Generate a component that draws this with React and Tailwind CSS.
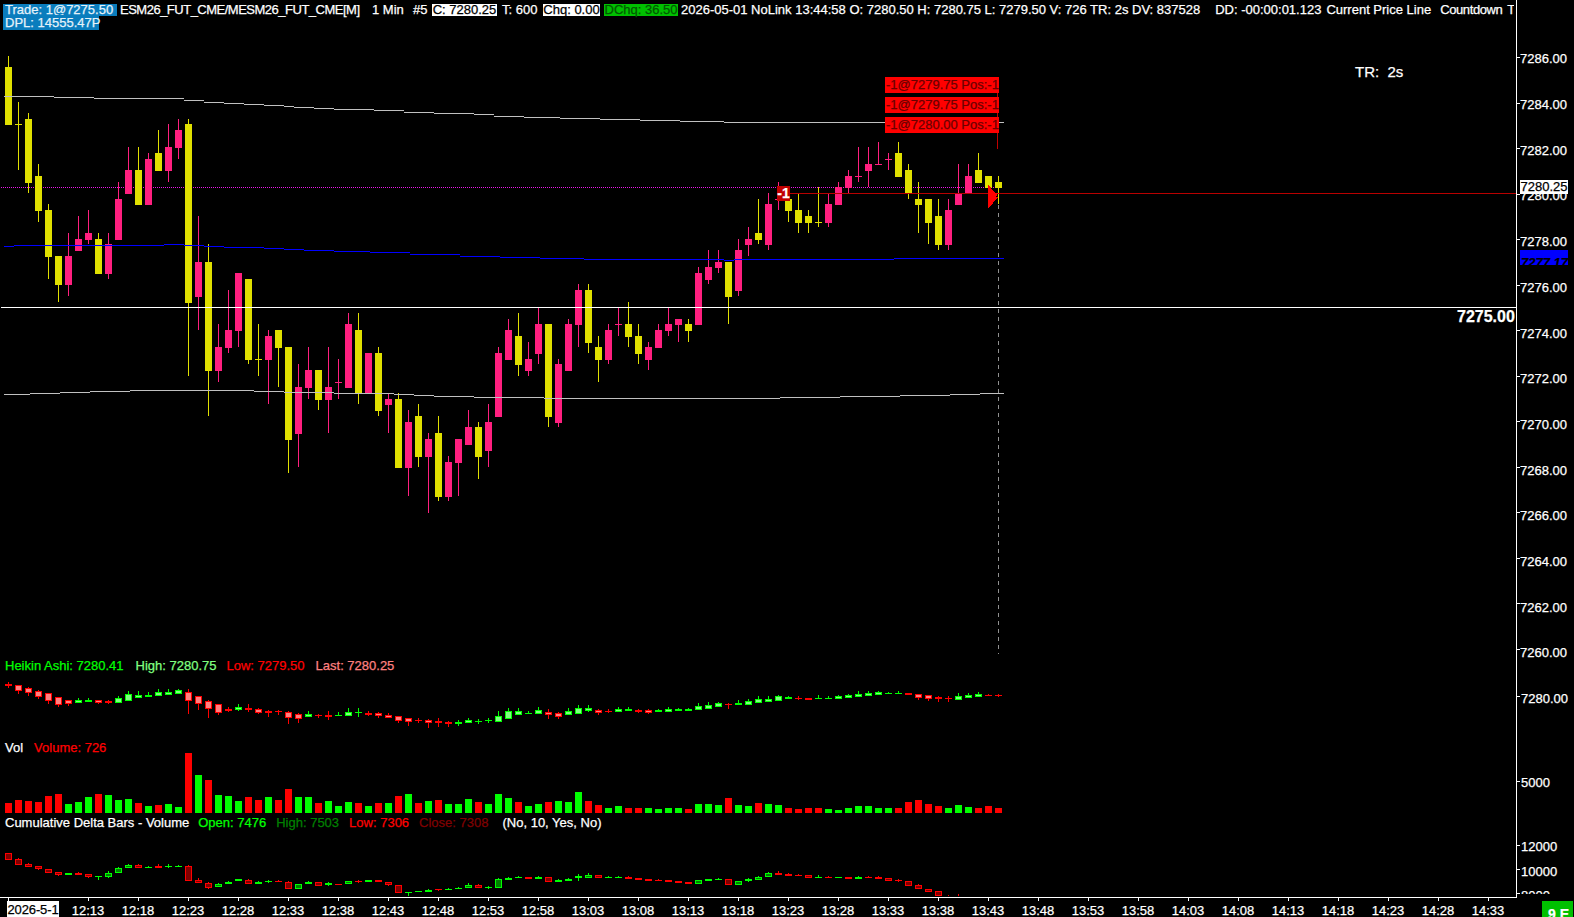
const PINK = "#ff1f7f";
const YELLOW = "#e0e000";

// y, wick top, body top, body bottom, wick bottom (screen pixels)
const PRICE = [
  ["y",56,67,125,125],["y",102,124,125,170],["y",113,119,183,193],["y",164,176,211,222],["y",204,210,257,279],
  ["y",256,256,285,302],["p",233,256,285,296],["p",216,239,251,251],["p",210,233,240,244],["y",233,239,274,274],
  ["p",233,244,274,279],["p",182,199,240,240],["p",147,170,194,194],["y",147,170,205,205],["p",153,159,205,205],
  ["y",130,153,171,171],["p",124,147,171,182],["p",119,130,148,159],["y",119,124,303,376],["p",216,262,297,330],
  ["y",244,262,371,416],["p",324,347,371,382],["p",290,330,348,353],["p",273,273,331,347],["y",279,279,360,364],
  ["y",324,359,360,376],["p",330,336,360,404],["y",330,330,348,387],["y",347,347,440,473],["p",364,387,434,467],
  ["p",347,370,388,399],["y",370,370,400,410],["p",347,387,400,433],["p",359,382,383,399],["p",313,324,388,388],
  ["y",313,330,393,404],["p",353,353,393,393],["y",347,353,411,416],["p",394,399,405,433],["y",393,399,468,468],
  ["p",410,422,468,496],["y",404,416,457,467],["p",433,439,457,513],["y",416,433,497,501],["p",456,462,497,501],
  ["p",439,439,463,496],["p",410,427,445,445],["y",422,427,457,479],["p",404,422,451,467],["p",347,353,417,417],
  ["p",319,330,360,360],["y",313,336,365,376],["p",342,359,371,376],["p",308,324,354,364],["y",324,324,417,427],
  ["p",359,364,423,427],["p",319,324,371,371],["p",284,290,325,347],["y",284,290,343,353],["y",336,347,360,382],
  ["p",324,330,360,364],["p",308,324,325,336],["y",302,324,337,347],["y",324,336,354,364],["p",342,347,360,370],
  ["p",324,330,348,348],["p",308,324,331,336],["p",319,319,325,342],["y",319,324,331,342],["p",267,273,325,325],
  ["p",250,267,280,284],["p",250,262,268,273],["y",262,262,297,324],["p",239,250,291,296],["p",227,239,245,256],
  ["y",199,233,240,244],["p",193,204,245,250],["p",182,199,200,210],["y",199,199,211,222],["y",194,210,223,233],
  ["y",210,216,223,233],["y",187,222,223,227],["p",194,204,223,227],["p",182,187,205,205],["p",170,176,188,194],
  ["p",147,176,177,182],["p",147,164,171,187],["p",142,164,165,165],["p",153,159,160,170],["y",142,153,177,177],
  ["y",164,170,193,199],["y",182,199,205,233],["y",199,199,223,244],["y",199,216,245,250],["p",199,210,245,250],
  ["p",164,193,205,205],["p",164,176,193,193],["y",153,170,183,183],["y",176,176,188,188],["y",176,182,188,204],
];

// Heikin Ashi values are in crop units: y = 650 + v / 3
const HA = [
  ["r",97,102,109,115],["r",105,106,122,131],["r",110,113,128,137],["r",120,122,140,147],["r",128,130,152,161],
  ["r",142,142,164,171],["r",150,151,161,167],["g",145,150,158,158],["g",145,149,155,155],["r",150,151,158,161],
  ["r",150,153,159,161],["g",137,145,158,158],["g",124,132,152,152],["g",124,136,143,143],["g",125,134,140,140],
  ["g",118,126,137,137],["g",116,126,134,134],["g",117,121,131,131],["r",117,127,152,191],["r",138,139,163,179],
  ["r",151,152,178,204],["r",163,163,188,195],["r",170,176,183,185],["g",162,172,180,182],["r",162,174,179,187],
  ["r",174,176,188,191],["r",180,182,188,201],["r",180,183,186,195],["r",184,185,204,222],["r",190,193,206,220],
  ["g",183,192,200,202],["r",192,195,198,204],["r",183,194,200,209],["g",186,194,197,197],["g",174,187,197,197],
  ["g",174,186,189,202],["r",184,188,194,197],["r",185,190,197,203],["r",190,194,203,203],["r",197,199,212,219],
  ["r",203,205,215,228],["r",203,209,213,218],["r",208,211,220,234],["r",205,214,220,232],["r",213,217,223,232],
  ["g",210,215,222,228],["g",205,210,220,220],["g",208,213,215,222],["g",203,211,214,219],["g",183,197,215,215],
  ["g",175,184,206,206],["g",175,184,194,194],["g",184,189,191,191],["g",172,181,191,191],["r",178,186,194,207],
  ["r",186,190,200,207],["g",175,184,194,194],["g",166,175,191,191],["g",166,174,182,186],["r",177,179,188,195],
  ["r",178,182,184,189],["g",172,177,185,185],["g",172,177,182,182],["r",176,180,185,189],["r",178,181,188,192],
  ["g",177,180,185,185],["g",172,178,185,185],["g",174,177,182,182],["g",174,177,182,182],["g",160,169,179,179],
  ["g",157,164,176,176],["g",156,160,170,170],["r",158,162,166,177],["g",151,159,166,166],["g",148,153,164,164],
  ["g",139,148,158,158],["g",138,148,155,155],["g",136,139,152,152],["g",139,141,146,146],["r",138,143,145,150],
  ["r",144,144,149,149],["g",136,145,146,146],["g",138,145,146,146],["g",135,139,146,146],["g",132,136,143,143],
  ["g",124,132,140,140],["g",124,130,137,137],["g",124,127,134,134],["g",127,128,131,131],["g",124,129,131,131],
  ["r",130,130,136,136],["r",132,133,143,149],["r",136,136,146,152],["r",139,142,148,156],["r",139,145,148,155],
  ["g",130,138,149,149],["g",129,135,143,143],["g",126,132,140,140],["r",132,135,136,138],["r",131,134,136,141],
];

const VOL_COLORS =
  "rrrrrr" + "gggrgggrgrgg" + "rgrgggrrgrrg" + "grgggrgrgr" + "grgrgggrgg" +
  "grggrgggrr" + "ggrrggggrg" + "ggrggrggrr" + "rrgggggggr" + "rrrrgggrrr";
const VOL_TOPS = [
  459,450,453,456,438,432,462,456,441,432,435,450,447,459,468,465,462,471,309,375,
  390,435,438,453,441,450,441,450,417,441,441,459,453,468,456,459,468,459,459,438,
  432,459,453,450,462,462,447,456,462,432,
  444,456,468,462,456,453,456,426,453,465,474,468,474,474,474,477,474,474,477,462,
  462,465,444,465,468,459,462,465,474,477,474,474,477,480,474,468,468,474,474,474,
  456,450,462,468,474,465,471,474,468,474,
];

const DELTA = [
  ["r",610,610,629,629],["r",624,628,644,644],["r",639,642,650,650],["r",649,649,658,660],["r",658,658,668,668],
  ["r",666,667,674,677],["g",670,670,674,674],["r",665,670,674,674],["r",672,673,682,684],["g",677,679,682,689],
  ["g",664,670,680,684],["g",651,655,670,670],["g",643,646,655,655],["r",643,646,655,655],["g",648,650,655,655],
  ["r",643,649,653,653],["g",643,649,652,653],["g",645,648,650,650],["r",646,649,692,692],["r",685,691,698,698],
  ["r",697,698,713,716],["g",700,703,712,712],["g",692,695,703,703],["g",687,688,694,694],["r",688,689,703,703],
  ["g",692,696,703,703],["g",690,693,696,700],["r",690,693,695,695],["r",694,695,716,716],["g",702,703,716,716],
  ["g",693,696,703,703],["r",697,697,707,707],["g",695,699,706,707],["r",701,701,705,705],["g",692,694,703,703],
  ["r",691,694,697,698],["g",689,691,697,697],["r",689,691,697,697],["r",697,697,706,707],["r",705,706,730,730],
  ["g",725,725,730,737],["g",722,724,726,726],["g",717,719,725,726],["r",716,718,721,722],["g",715,716,721,721],
  ["g",712,713,716,716],["g",700,704,713,713],["r",702,704,713,713],["g",708,711,714,716],["g",685,688,713,713],
  ["g",680,683,689,689],["g",679,681,683,683],["r",681,681,687,687],["g",678,681,686,687],["r",682,682,695,695],
  ["g",688,690,695,695],["g",684,686,692,692],["g",673,679,685,692],["g",670,676,684,684],["r",675,676,683,683],
  ["g",679,681,683,683],["g",679,681,683,684],["r",678,681,686,686],["r",683,685,689,690],["r",688,688,692,692],
  ["r",688,690,692,693],["r",690,691,695,695],["r",694,694,698,698],["r",696,697,701,701],["g",691,691,701,701],
  ["g",687,688,692,692],["g",684,687,689,690],["r",688,688,704,704],["g",692,694,704,705],["g",684,687,694,695],
  ["g",677,680,689,689],["g",667,670,680,680],["r",663,670,675,675],["r",670,672,678,678],["r",672,675,677,678],
  ["r",676,676,683,683],["g",675,680,682,684],["r",678,681,682,684],["g",682,682,683,683],["r",682,682,686,686],
  ["g",678,681,686,687],["r",679,681,683,683],["r",678,681,686,687],["r",684,685,692,692],["r",688,690,694,695],
  ["r",692,694,707,707],["r",703,706,718,718],["r",718,718,725,725],["r",724,724,738,738],["r",736,737,738,738],
  ["r",732,738,738,738],
];

const GREY_TOP = [[54,96],[94,97],[184,98],[204,100],[224,102],[244,103],[264,104],[284,105],[294,106],[314,107],[334,108],[374,109],[404,110],[434,112],[474,113],[494,114],[524,116],[560,117],[600,118],[640,119],[680,120],[724,121],[1004,122]];
const GREY_LOW = [[30,394],[60,393],[90,392],[130,391],[254,390],[284,391],[334,392],[394,393],[414,394],[434,395],[474,396],[544,397],[780,398],[840,397],[900,396],[950,395],[980,394],[1004,393]];
const BLUE_LINE = [[14,246],[164,245],[184,244],[204,245],[224,246],[264,247],[284,248],[304,249],[334,250],[370,251],[410,252],[460,254],[500,256],[540,257],[584,258],[724,259],[734,260],[894,259],[1004,258]];

const PRICE_TICKS = [7286,7284,7282,7280,7278,7276,7274,7272,7270,7268,7266,7264,7262,7260];
const LOWER_TICKS = [
  { label: "7280.00", y: 696, top: 691 },
  { label: "5000", y: 781, top: 775 },
  { label: "12000", y: 845, top: 839 },
  { label: "10000", y: 869, top: 864 },
];
const TIMES = ["12:13","12:18","12:23","12:28","12:33","12:38","12:43","12:48","12:53","12:58","13:03","13:08","13:13","13:18","13:23","13:28","13:33","13:38","13:43","13:48","13:53","13:58","14:03","14:08","14:13","14:18","14:23","14:28","14:33"];

function stepPath(start, segs) {
  let x = start;
  let d = "";
  segs.forEach(([end, y]) => {
    d += `M${x} ${y + 0.5}H${end}`;
    x = end;
  });
  return d;
}

function PriceChart() {
  return (
    <svg className="absolute inset-0" width="1516" height="654" viewBox="0 0 1516 654" shapeRendering="crispEdges">
      <path d="M1 187.5H997" stroke="#e818e8" strokeDasharray="1 1" />
      {PRICE.map(([c, wt, bt, bb, wb], i) => {
        const fill = c === "y" ? YELLOW : PINK;
        return (
          <g key={i} fill={fill}>
            <rect x={8 + i * 10} y={wt} width="1" height={wb - wt} />
            <rect x={5 + i * 10} y={bt} width="7" height={bb - bt} />
          </g>
        );
      })}
      <path d={stepPath(4, GREY_TOP)} stroke="#c0c0c0" fill="none" />
      <path d={stepPath(4, GREY_LOW)} stroke="#c0c0c0" fill="none" />
      <path d={stepPath(4, BLUE_LINE)} stroke="#0000ff" fill="none" />
      <path d="M1 307.5H1516" stroke="#ffffff" />
      <path d="M790 193.5H1516" stroke="#b80000" />
      <path d="M998.5 205V654" stroke="#909090" strokeDasharray="4 4" />
      <path d="M997.5 93V149" stroke="#c00000" />
      <path d="M988 184L995 193L998 193L996 197L998 197L988 209Z" fill="#ff0000" />
    </svg>
  );
}

function MiniCandles({ top, height, data, colors }) {
  return (
    <svg className="absolute inset-0" width="1516" height={height} viewBox={`0 ${top} 1516 ${height}`} shapeRendering="crispEdges">
      {data.map(([c, wt, bt, bb, wb], i) => {
        const col = colors[c];
        const y1 = Math.round(650 + bt / 3);
        const y2 = Math.max(Math.round(650 + bb / 3), y1 + 1);
        const w1 = Math.round(650 + wt / 3);
        const w2 = Math.round(650 + wb / 3);
        return (
          <g key={i}>
            <rect x={8 + i * 10} y={w1} width="1" height={Math.max(w2 - w1, 1)} fill={col.line} />
            <rect x={5 + i * 10} y={y1} width="7" height={y2 - y1} fill={col.line} />
            {y2 - y1 > 2 && <rect x={6 + i * 10} y={y1 + 1} width="5" height={y2 - y1 - 2} fill={col.fill} />}
          </g>
        );
      })}
    </svg>
  );
}

function VolumeBars({ top, height }) {
  return (
    <svg className="absolute inset-0" width="1516" height={height} viewBox={`0 ${top} 1516 ${height}`} shapeRendering="crispEdges">
      {VOL_TOPS.map((z, i) => {
        const y = Math.round(650 + z / 3);
        return <rect key={i} x={5 + i * 10} y={y} width="7" height={813 - y} fill={VOL_COLORS[i] === "r" ? "#ff0000" : "#00ff00"} />;
      })}
    </svg>
  );
}

function HeaderBar() {
  return (
    <div className="relative z-10 flex flex-col items-start whitespace-pre pl-[3px] pt-[4px]">
      <div className="flex h-[11px] items-center leading-[15px]">
        <span className="flex h-[12px] w-[114px] items-center bg-[#0a7dbd] pl-[2px] text-[#e4f2fa]">Trade: 1@7275.50</span>
        <span className="ml-[3px] w-[252px] tracking-[-0.5px]">ESM26_FUT_CME/MESM26_FUT_CME[M]</span>
        <span className="w-[41px]">1 Min</span>
        <span className="w-[19px]">#5</span>
        <span className="flex h-[12px] w-[65px] items-center justify-center bg-white text-black">C: 7280.25</span>
        <span className="ml-[5px] w-[41px]">T: 600</span>
        <span className="flex h-[12px] w-[57px] items-center justify-center bg-white text-black">Chq: 0.00</span>
        <span className="ml-[4px] flex h-[12px] w-[74px] items-center justify-center bg-[#00c000] text-[#005800]">DChq: 36.50</span>
        <span className="ml-[3px] flex w-[833px] overflow-hidden">
          <span>2026-05-01 NoLink 13:44:58 O: 7280.50 H: 7280.75 L: 7279.50 V: 726 TR: 2s DV: 837528</span>
          <span className="ml-[15px]">DD: -00:00:01.123</span>
          <span className="ml-[5px]">Current Price Line</span>
          <span className="ml-[9px] tracking-[-0.4px]">Countdown</span>
          <span className="ml-[5px]">T</span>
        </span>
      </div>
      <div className="flex h-[15px] w-[96px] items-center bg-[#0a7dbd] pl-[2px] leading-[15px] text-[#e4f2fa]">DPL: 14555.47P</div>
    </div>
  );
}

function OrderTags() {
  const tags = ["-1@7279.75 Pos:-1", "-1@7279.75 Pos:-1", "-1@7280.00 Pos:-1"];
  return (
    <div className="absolute left-[885px] top-[77px] flex w-[114px] flex-col gap-[4px]">
      {tags.map((t, i) => (
        <div key={i} className="h-[16px] whitespace-pre bg-[#ff0000] pl-[1px] leading-[16px] text-[#6a0000]">{t}</div>
      ))}
    </div>
  );
}

function Legend({ items }) {
  return (
    <div className="relative z-10 flex whitespace-pre pl-[5px] leading-[15px]">
      {items.map((it, i) => (
        <span key={i} style={{ color: it.color, marginLeft: it.gap }}>{it.text}</span>
      ))}
    </div>
  );
}

function PriceScale() {
  return (
    <div className="relative h-[897px] w-[58px] overflow-hidden border-l border-white">
      {PRICE_TICKS.map((p, i) => {
        const y = Math.round(57 + i * 45.5);
        return (
          <div key={p}>
            <div className="absolute left-0 h-px w-[3px] bg-white" style={{ top: y }} />
            <div className="absolute left-[3px] leading-[15px]" style={{ top: Math.round(51.3 + i * 45.7) }}>{p}.00</div>
          </div>
        );
      })}
      {LOWER_TICKS.map((t) => (
        <div key={t.label}>
          <div className="absolute left-0 h-px w-[3px] bg-white" style={{ top: t.y }} />
          <div className="absolute left-[4px] leading-[15px]" style={{ top: t.top }}>{t.label}</div>
        </div>
      ))}
      <div className="absolute left-0 top-[893px] h-px w-[3px] bg-white" />
      <div className="absolute left-[4px] top-[888px] h-[6px] overflow-hidden leading-[15px]">8000</div>

      <div className="absolute left-[3px] top-[180px] h-[14px] w-[48px] bg-white text-center leading-[14px] text-black">7280.25</div>
      <div className="absolute left-[3px] top-[250px] h-[15px] w-[48px] overflow-hidden bg-[#0000ff] pl-[1px] pt-[5px] font-bold italic leading-[15px] text-black">7277.17</div>
    </div>
  );
}

function TimeAxis() {
  return (
    <div className="flex h-[20px] w-[1574px]">
      <div className="relative h-[20px] w-[1517px] border-t border-white">
        <div className="absolute left-[8px] top-0 h-[3px] w-px bg-white" />
        <div className="absolute left-[7px] top-[3px] h-[16px] w-[52px] whitespace-nowrap bg-white text-center leading-[18px] tracking-[-0.1px] text-black">2026-5-1</div>
        {TIMES.map((t, i) => (
          <div key={t} className="absolute top-0 flex w-[40px] flex-col items-center" style={{ left: 68 + i * 50 }}>
            <div className="h-[3px] w-px bg-white" />
            <div className="mt-[2px] leading-[15px]">{t}</div>
          </div>
        ))}
      </div>
      <div className="ml-[25px] mt-[4px] h-[16px] w-[31px] overflow-hidden bg-[#00c000] pl-[6px] pt-[5px] text-[14px] font-bold leading-[16px]">9 E</div>
    </div>
  );
}

export default function App() {
  return (
    <div className="flex h-[917px] w-[1574px] flex-col overflow-hidden bg-black font-['Liberation_Sans',Arial,sans-serif] text-[13px] text-white [-webkit-text-stroke:0.25px]">
      <div className="flex h-[897px]">
        <div className="flex w-[1516px] flex-col">
          <div className="relative h-[654px]">
            <PriceChart />
            <HeaderBar />
            <OrderTags />
            <div className="absolute left-[777px] top-[186px] h-[15px] w-[13px] bg-[#c00000] text-center text-[14px] font-bold leading-[15px]">-1</div>
            <div className="absolute left-[1355px] top-[63px] whitespace-pre text-[15px] leading-[17px]">TR:  2s</div>
            <div className="absolute left-[1457px] top-[308px] text-[16px] font-bold leading-[18px]">7275.00</div>
          </div>
          <div className="relative h-[86px] pt-[4px]">
            <MiniCandles top={654} height={86} data={HA} colors={{ r: { line: "#ff0000", fill: "#ff8080" }, g: { line: "#00ff00", fill: "#80ff80" } }} />
            <Legend
              items={[
                { text: "Heikin Ashi: 7280.41", color: "#00ff00" },
                { text: "High: 7280.75", color: "#80ff80", gap: 12 },
                { text: "Low: 7279.50", color: "#ff0000", gap: 10 },
                { text: "Last: 7280.25", color: "#ff8080", gap: 11 },
              ]}
            />
          </div>
          <div className="relative h-[75px]">
            <VolumeBars top={740} height={75} />
            <Legend
              items={[
                { text: "Vol", color: "#ffffff" },
                { text: "Volume: 726", color: "#ff0000", gap: 11 },
              ]}
            />
          </div>
          <div className="relative h-[82px] overflow-hidden">
            <MiniCandles top={815} height={81} data={DELTA} colors={{ r: { line: "#ff0000", fill: "#800000" }, g: { line: "#00ff00", fill: "#008000" } }} />
            <Legend
              items={[
                { text: "Cumulative Delta Bars - Volume", color: "#ffffff" },
                { text: "Open: 7476", color: "#00ff00", gap: 9 },
                { text: "High: 7503", color: "#008000", gap: 10 },
                { text: "Low: 7306", color: "#ff0000", gap: 10 },
                { text: "Close: 7308", color: "#800000", gap: 10 },
                { text: "(No, 10, Yes, No)", color: "#ffffff", gap: 14 },
              ]}
            />
          </div>
        </div>
        <PriceScale />
      </div>
      <TimeAxis />
    </div>
  );
}
